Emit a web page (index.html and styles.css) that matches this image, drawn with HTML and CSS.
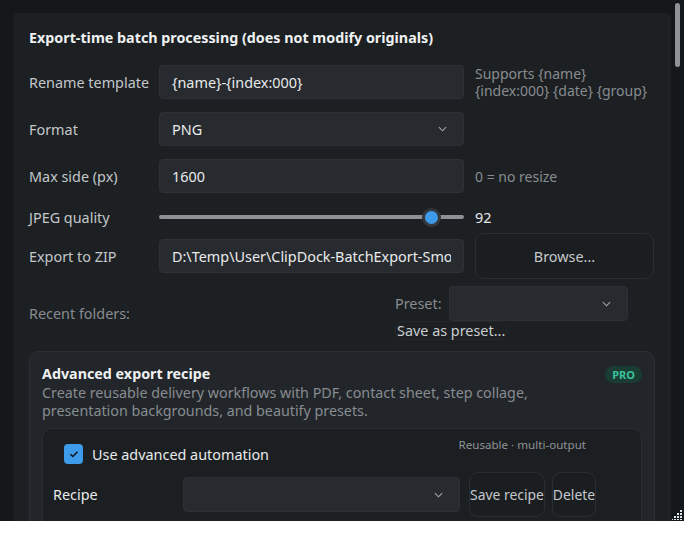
FILE: index.html
```html
<!DOCTYPE html>
<html lang="en">
  <head>
    <meta charset="UTF-8" />
    <title>Batch export</title>
    <link rel="stylesheet" href="styles.css">
  </head>
  <body>
    <div class="window">
      <div class="scroll-area">
        <div class="panel">
          <h2 class="panel-title">Export-time batch processing (does not modify originals)</h2>

          <div class="row">
            <label class="row-label">Rename template</label>
            <input class="field" type="text" value="{name}-{index:000}" />
            <span class="hint">
              <span class="hint-line">Supports {name}</span>
              <span class="hint-line">{index:000} {date} {group}</span>
            </span>
          </div>

          <div class="row">
            <label class="row-label">Format</label>
            <div class="field select">
              <span>PNG</span>
              <svg class="chevron" viewBox="0 0 10 6"><path d="M1 1l4 4 4-4" /></svg>
            </div>
          </div>

          <div class="row">
            <label class="row-label">Max side (px)</label>
            <input class="field" type="text" value="1600" />
            <span class="hint">0 = no resize</span>
          </div>

          <div class="row row-slider">
            <label class="row-label">JPEG quality</label>
            <input class="slider" type="range" min="0" max="100" value="92" />
            <span class="value">92</span>
          </div>

          <div class="row row-zip">
            <label class="row-label">Export to ZIP</label>
            <input class="field" type="text" value="D:\Temp\User\ClipDock-BatchExport-Smoke\export.zip" />
            <button class="btn btn-browse">Browse...</button>
          </div>

          <div class="recent">
            <span class="recent-label">Recent folders:</span>
            <div class="preset-group">
              <div class="preset-line">
                <span class="preset-label">Preset:</span>
                <div class="field select preset-select">
                  <span></span>
                  <svg class="chevron" viewBox="0 0 10 6"><path d="M1 1l4 4 4-4" /></svg>
                </div>
              </div>
              <button class="btn btn-link">Save as preset...</button>
            </div>
          </div>

          <div class="card">
            <div class="card-head">
              <h3 class="card-title">Advanced export recipe</h3>
              <span class="badge">PRO</span>
            </div>
            <p class="card-desc">Create reusable delivery workflows with PDF, contact sheet, step collage,<br />presentation backgrounds, and beautify presets.</p>

            <div class="inner-card">
              <div class="auto-line">
                <label class="check">
                  <span class="checkbox">
                    <svg viewBox="0 0 12 12"><path d="M2.5 6.2l2.3 2.3 4.7-4.8" /></svg>
                  </span>
                  Use advanced automation
                </label>
                <span class="small-note">Reusable · multi-output</span>
              </div>
              <div class="recipe-line">
                <span class="recipe-label">Recipe</span>
                <div class="field select recipe-select">
                  <span></span>
                  <svg class="chevron" viewBox="0 0 10 6"><path d="M1 1l4 4 4-4" /></svg>
                </div>
                <button class="btn btn-small">Save recipe</button>
                <button class="btn btn-small">Delete</button>
              </div>
            </div>
          </div>
        </div>
      </div>
      <div class="scrollbar"><div class="thumb"></div></div>
      <svg class="grip" viewBox="0 0 10 10">
        <rect x="8" y="0" width="2" height="2" />
        <rect x="5" y="3" width="2" height="2" /><rect x="8" y="3" width="2" height="2" />
        <rect x="2" y="6" width="2" height="2" /><rect x="5" y="6" width="2" height="2" /><rect x="8" y="6" width="2" height="2" />
        <rect x="-1" y="9" width="2" height="2" /><rect x="2" y="9" width="2" height="2" /><rect x="5" y="9" width="2" height="2" /><rect x="8" y="9" width="2" height="2" />
      </svg>
    </div>
  </body>
</html>
```

FILE: styles.css
```css
* {
  margin: 0;
  padding: 0;
  box-sizing: border-box;
}

body {
  background-color: #ffffff;
  font-family: "Noto Sans", "Open Sans", sans-serif;
  font-size: 14px;
  color: #e6e8ea;
}

.window {
  position: relative;
  width: 684px;
  height: 521px;
  overflow: hidden;
  background-color: #15181b;
  display: flex;
}

.scroll-area {
  flex: 1;
  padding: 13px 0 0 13px;
}

.scrollbar {
  width: 13px;
  padding: 3px 4px 0 4px;
}

.thumb {
  width: 5px;
  height: 64px;
  border-radius: 3px;
  background-color: #8f9397;
}

.grip {
  position: absolute;
  right: 2px;
  bottom: 1px;
  width: 10px;
  height: 10px;
  fill: #dfe3ea;
}

.panel {
  width: 658px;
  min-height: 560px;
  background-color: #1d2023;
  border-radius: 5px 5px 0 0;
  padding: 15px 16px 0 16px;
}

.panel-title {
  font-size: 14.3px;
  font-weight: 700;
  color: #eef0f1;
  line-height: 20px;
  margin-bottom: 17px;
}

.row {
  display: flex;
  align-items: center;
  gap: 11px;
  margin-bottom: 13px;
}

.row-label {
  flex-shrink: 0;
  width: 119px;
  white-space: nowrap;
  font-size: 14.4px;
  color: #c3c7ca;
}

.field {
  flex-shrink: 0;
  width: 305px;
  height: 34px;
  background-color: #272a2e;
  border: 1px solid #2d3135;
  border-radius: 4px;
  padding: 0 12px;
  font-family: inherit;
  font-size: 14.4px;
  color: #e9ebec;
  outline: none;
}

.select {
  display: flex;
  align-items: center;
  justify-content: space-between;
  padding-right: 16px;
}

.chevron {
  width: 9px;
  height: 6px;
  fill: none;
  stroke: #a6abaf;
  stroke-width: 1.2;
}

.hint {
  display: flex;
  flex-direction: column;
  font-size: 14px;
  line-height: 17px;
  color: #878c90;
  white-space: nowrap;
}

.row-slider {
  height: 22px;
  margin-bottom: 5px;
}

.slider {
  -webkit-appearance: none;
  appearance: none;
  flex-shrink: 0;
  width: 305px;
  height: 4px;
  border-radius: 2px;
  background-color: #8d9195;
  outline: none;
}

.slider::-webkit-slider-thumb {
  -webkit-appearance: none;
  width: 19px;
  height: 19px;
  border-radius: 50%;
  background-color: #3e9bea;
  border: 3px solid #33373b;
}

.value {
  font-size: 14.4px;
  color: #e6e8ea;
}

.btn {
  font-family: inherit;
  background-color: #1b1e21;
  border: 1px solid #2a2e32;
  color: #c4c8cb;
  cursor: pointer;
}

.btn-browse {
  width: 179px;
  height: 46px;
  border-radius: 9px;
  font-size: 14.4px;
}

.row-zip {
  margin-bottom: 7px;
}

.recent {
  display: flex;
  align-items: center;
}

.recent-label {
  width: 366px;
  font-size: 14.4px;
  color: #878c90;
}

.preset-group {
  display: flex;
  flex-direction: column;
  align-items: flex-start;
}

.preset-line {
  display: flex;
  align-items: center;
  gap: 7px;
}

.preset-label {
  font-size: 14.4px;
  color: #878c90;
}

.preset-select {
  width: 179px;
  height: 35px;
}

.btn-link {
  font-size: 14.4px;
  padding: 0 1px;
  height: 19px;
  line-height: 17px;
  border-radius: 8px;
  background-color: transparent;
  border-color: #23272a;
  color: #c9cdd0;
}

.card {
  margin-top: 11px;
  background-color: #22262a;
  border: 1px solid #2c3034;
  border-radius: 10px;
  padding: 12px 12px 0 12px;
}

.card-head {
  display: flex;
  align-items: center;
  justify-content: space-between;
}

.card-title {
  font-size: 14.3px;
  font-weight: 700;
  color: #eef0f1;
  line-height: 20px;
}

.badge {
  background-color: #193c33;
  color: #3cc09b;
  font-size: 11px;
  font-weight: 700;
  padding: 1px 7px;
  border-radius: 9px;
}

.card-desc {
  font-size: 14.3px;
  line-height: 18px;
  color: #878c90;
  margin-bottom: 8px;
}

.inner-card {
  background-color: #1c1f22;
  border: 1px solid #2a2e32;
  border-radius: 10px;
  padding: 8px 10px 20px 10px;
}

.auto-line {
  display: flex;
  justify-content: space-between;
  align-items: flex-start;
  padding: 0 45px 0 11px;
}

.check {
  display: flex;
  align-items: center;
  gap: 9px;
  font-size: 14.4px;
  color: #e8eaeb;
  margin-top: 7px;
}

.checkbox {
  width: 19px;
  height: 20px;
  border-radius: 4px;
  background-color: #3d9be9;
  display: flex;
  align-items: center;
  justify-content: center;
}

.checkbox svg {
  width: 12px;
  height: 12px;
  fill: none;
  stroke: #111417;
  stroke-width: 1.5;
}

.small-note {
  font-size: 11.6px;
  color: #8d9296;
}

.recipe-line {
  display: flex;
  align-items: center;
  margin-top: 8px;
}

.recipe-label {
  width: 130px;
  font-size: 14.4px;
  color: #e8eaeb;
}

.recipe-select {
  width: 277px;
  height: 35px;
  margin-right: 9px;
}

.btn-small {
  height: 45px;
  font-size: 13.9px;
  padding: 0;
  border-radius: 9px;
  margin-right: 7px;
}
```
